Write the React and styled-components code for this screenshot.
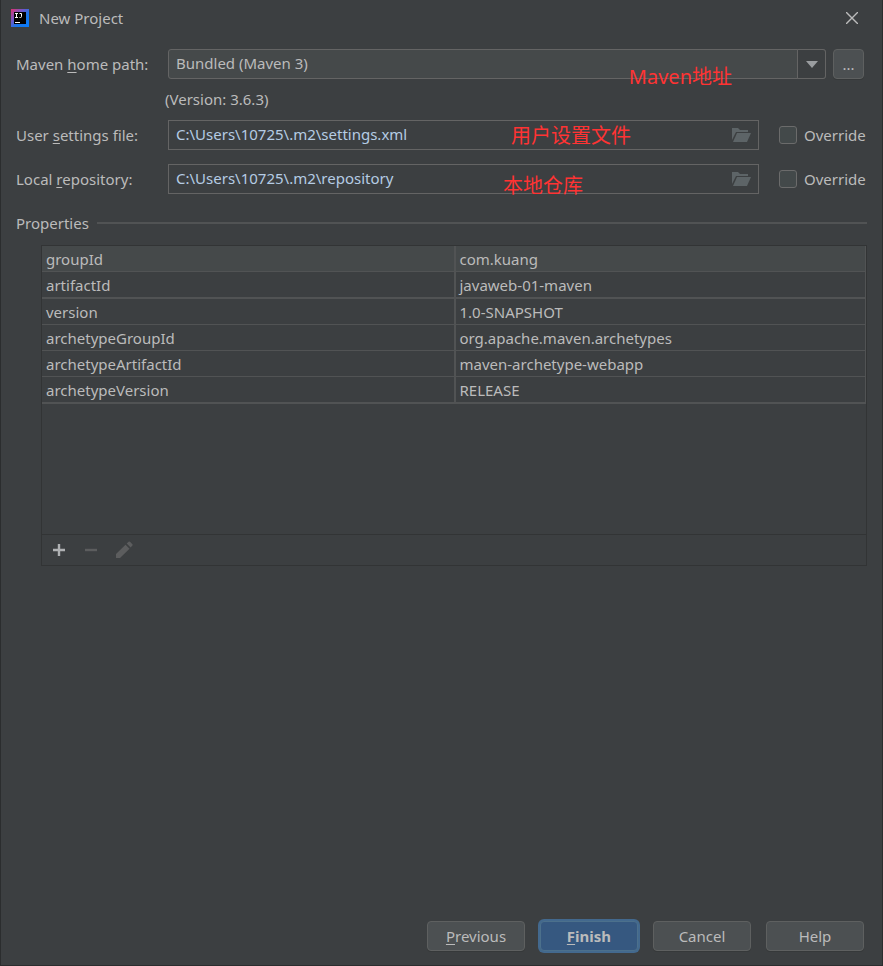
import { useState } from 'react';
import styled, { createGlobalStyle, css } from 'styled-components';

const colors = {
  panel: '#3c3f41',
  raised: '#45494a',
  button: '#4c5052',
  frame: '#2b2d2e',
  tableFrame: '#323435',
  line: '#515354',
  border: '#646464',
  text: '#bbbbbb',
  path: '#b5cce4',
  note: '#ff3333',
};

const GlobalStyle = createGlobalStyle`
  *, *::before, *::after {
    box-sizing: border-box;
  }

  body {
    margin: 0;
    background: ${colors.panel};
  }

  body, button, input, select {
    font-family: 'Noto Sans', 'Noto Sans CJK SC', sans-serif;
    font-size: 15px;
    line-height: 20px;
    color: ${colors.text};
  }
`;

const Dialog = styled.div`
  display: flex;
  flex-direction: column;
  min-height: 100vh;
  background: ${colors.panel};
  border: 1px solid ${colors.frame};
  border-top: 0;
`;

const TitleBar = styled.header`
  display: flex;
  align-items: center;
  gap: 10px;
  height: 36px;
  padding: 0 24px 0 10px;

  h1 {
    flex: 1;
    margin: 0;
    font-size: 15px;
    font-weight: 400;
  }
`;

const IconButton = styled.button`
  display: flex;
  flex: none;
  padding: 0;
  border: 0;
  background: none;

  svg {
    display: block;
  }
`;

const Form = styled.form`
  display: flex;
  flex-direction: column;
  padding: 13px 15px 0;
`;

const Row = styled.div`
  display: flex;
  align-items: center;
  margin-bottom: 14px;
`;

const Label = styled.label`
  flex: none;
  width: 152px;
`;

const Mnemonic = styled.span`
  text-decoration: underline;
  text-underline-offset: 2px;
`;

const Field = styled.div`
  position: relative;
  display: grid;
  flex: 1;
  min-width: 0;
  height: 30px;

  > * {
    grid-area: 1 / 1;
  }
`;

const Select = styled.select`
  appearance: none;
  width: 100%;
  padding: 0 36px 2px 7px;
  border: 1px solid ${colors.border};
  border-radius: 3px;
  background: ${colors.raised};
`;

const Arrow = styled.span`
  display: flex;
  align-items: center;
  justify-content: center;
  justify-self: end;
  width: 29px;
  border: 1px solid ${colors.border};
  border-radius: 0 3px 3px 0;
  background: ${colors.panel};
  pointer-events: none;
`;

const PathInput = styled.input`
  width: 100%;
  padding: 0 36px 2px 7px;
  border: 1px solid ${colors.border};
  background: ${colors.panel};
  color: ${colors.path};
`;

const BrowseButton = styled(IconButton)`
  align-self: center;
  justify-self: end;
  margin-right: 7px;
`;

const Note = styled.span`
  position: absolute;
  top: ${({ $top }) => $top}px;
  right: ${({ $right }) => $right}px;
  color: ${colors.note};
  font-size: 20px;
  line-height: 24px;
  pointer-events: none;
`;

const Version = styled.p`
  margin: -4px 0 11px 149px;
`;

const Override = styled.label`
  display: flex;
  flex: none;
  align-items: center;
  gap: 7px;
  width: 88px;
  margin-left: 20px;
`;

const Checkbox = styled.input`
  appearance: none;
  flex: none;
  width: 18px;
  height: 18px;
  margin: 0;
  border: 1px solid #6b6b6b;
  border-radius: 3px;
  background: #43494a;

  &:checked {
    background: #375a87;
  }
`;

const Button = styled.button`
  width: 98px;
  height: 30px;
  padding: 0;
  border: 1px solid #5e6060;
  border-radius: 4px;
  background: ${colors.button};
  box-shadow: 0 1px 0 #36393a;

  ${({ $primary }) =>
    $primary &&
    css`
      border-color: #4c708c;
      background: #365880;
      box-shadow: 0 0 0 2px #43698e;
      font-weight: 700;
    `}
`;

const MoreButton = styled(Button)`
  flex: none;
  width: 31px;
  margin: 0 3px 0 7px;
`;

const SectionTitle = styled.h2`
  display: flex;
  align-items: center;
  gap: 8px;
  margin: 5px 0 12px;
  font-size: 15px;
  font-weight: 400;

  &::after {
    content: '';
    flex: 1;
    height: 2px;
    background: ${colors.line};
  }
`;

const Properties = styled.div`
  display: flex;
  flex-direction: column;
  height: 321px;
  margin-left: 25px;
  border: 1px solid ${colors.tableFrame};
`;

const TableArea = styled.div`
  flex: 1;
`;

const Table = styled.table`
  width: 100%;
  table-layout: fixed;
  border-spacing: 0;
  border-right: 1px solid ${colors.line};

  td {
    height: 26px;
    padding: 1px 4px 0;
    border-bottom: 1px solid ${colors.line};
  }

  td + td {
    border-left: 2px solid ${colors.line};
  }

  tr:first-child {
    background: ${colors.raised};
  }

  tr:nth-child(2) td,
  tr:last-child td {
    height: 27px;
    border-bottom-width: 2px;
  }
`;

const Toolbar = styled.div`
  display: flex;
  align-items: center;
  gap: 14px;
  height: 31px;
  padding-left: 8px;
  border-top: 1px solid ${colors.tableFrame};
`;

const Footer = styled.footer`
  display: flex;
  justify-content: flex-end;
  gap: 15px;
  margin-top: auto;
  padding: 20px 18px 14px;
`;

const LogoIcon = () => (
  <svg width="18" height="18" viewBox="0 0 18 18" aria-hidden="true">
    <defs>
      <linearGradient id="logo" x1="0" y1="0" x2="1" y2="1">
        <stop offset="0" stopColor="#e0316f" />
        <stop offset="0.35" stopColor="#7256c8" />
        <stop offset="0.6" stopColor="#1a75e8" />
        <stop offset="1" stopColor="#087cfa" />
      </linearGradient>
    </defs>
    <rect width="18" height="18" fill="url(#logo)" />
    <rect x="3" y="3" width="12" height="12" fill="#000" />
    <path
      d="M4 4.5h3M5.5 4.5v4M4 8.5h3M8.5 4.5h2v3q0 1-1 1h-1M4 13.5h5"
      fill="none"
      stroke="#fff"
    />
  </svg>
);

const CloseIcon = () => (
  <svg width="12" height="12" viewBox="0 0 12 12" aria-hidden="true">
    <path d="M0 0l12 12M12 0L0 12" stroke="#bbb" strokeWidth="1.4" />
  </svg>
);

const FolderIcon = () => (
  <svg width="20" height="14" viewBox="0 0 20 14" aria-hidden="true">
    <path d="M0 0h6l2 2h8v2H4L0 12z" fill="#5d6467" />
    <path d="M5 5h14l-4 9H1z" fill="#5d6467" />
  </svg>
);

const PlusIcon = () => (
  <svg width="18" height="18" viewBox="0 0 18 18" aria-hidden="true">
    <path d="M9 3v12M3 9h12" stroke="#afb1b3" strokeWidth="2.4" />
  </svg>
);

const MinusIcon = () => (
  <svg width="18" height="18" viewBox="0 0 18 18" aria-hidden="true">
    <path d="M3 9h12" stroke="#5c5d5e" strokeWidth="2.4" />
  </svg>
);

const PencilIcon = () => (
  <svg width="20" height="18" viewBox="0 0 20 18" aria-hidden="true">
    <path d="M2 13L11.5 3.8l4 4L6 17H2zM12.7 2.6L14.6.8q.7-.6 1.4 0l2.4 2.4q.7.7 0 1.4l-1.8 1.9z" fill="#5c5d5e" />
  </svg>
);

const properties = [
  ['groupId', 'com.kuang'],
  ['artifactId', 'javaweb-01-maven'],
  ['version', '1.0-SNAPSHOT'],
  ['archetypeGroupId', 'org.apache.maven.archetypes'],
  ['archetypeArtifactId', 'maven-archetype-webapp'],
  ['archetypeVersion', 'RELEASE'],
];

const PathRow = ({ id, label, initialPath, note }) => {
  const [path, setPath] = useState(initialPath);

  return (
    <Row>
      <Label htmlFor={id}>{label}</Label>
      <Field>
        <PathInput id={id} value={path} onChange={(e) => setPath(e.target.value)} />
        <BrowseButton type="button" aria-label="Browse">
          <FolderIcon />
        </BrowseButton>
        {note}
      </Field>
      <Override>
        <Checkbox type="checkbox" />
        Override
      </Override>
    </Row>
  );
};

const App = () => (
  <>
    <GlobalStyle />
    <Dialog>
      <TitleBar>
        <LogoIcon />
        <h1>New Project</h1>
        <IconButton type="button" aria-label="Close">
          <CloseIcon />
        </IconButton>
      </TitleBar>

      <Form>
        <Row>
          <Label htmlFor="maven-home">
            Maven <Mnemonic>h</Mnemonic>ome path:
          </Label>
          <Field>
            <Select id="maven-home">
              <option>Bundled (Maven 3)</option>
            </Select>
            <Arrow>
              <svg width="12" height="7" viewBox="0 0 12 7" aria-hidden="true">
                <path d="M0 0h12L6 7z" fill="#9a9da0" />
              </svg>
            </Arrow>
            <Note $top={16} $right={94}>
              Maven地址
            </Note>
          </Field>
          <MoreButton type="button">...</MoreButton>
        </Row>
        <Version>(Version: 3.6.3)</Version>

        <PathRow
          id="settings-file"
          label={
            <>
              User <Mnemonic>s</Mnemonic>ettings file:
            </>
          }
          initialPath="C:\Users\10725\.m2\settings.xml"
          note={
            <Note $top={4} $right={128}>
              用户设置文件
            </Note>
          }
        />
        <PathRow
          id="local-repository"
          label={
            <>
              Local <Mnemonic>r</Mnemonic>epository:
            </>
          }
          initialPath="C:\Users\10725\.m2\repository"
          note={
            <Note $top={10} $right={176}>
              本地仓库
            </Note>
          }
        />

        <SectionTitle>Properties</SectionTitle>
        <Properties>
          <TableArea>
            <Table>
              <tbody>
                {properties.map(([name, value]) => (
                  <tr key={name}>
                    <td>{name}</td>
                    <td>{value}</td>
                  </tr>
                ))}
              </tbody>
            </Table>
          </TableArea>
          <Toolbar>
            <IconButton type="button" aria-label="Add">
              <PlusIcon />
            </IconButton>
            <IconButton type="button" aria-label="Remove" disabled>
              <MinusIcon />
            </IconButton>
            <IconButton type="button" aria-label="Edit" disabled>
              <PencilIcon />
            </IconButton>
          </Toolbar>
        </Properties>
      </Form>

      <Footer>
        <Button type="button">
          <Mnemonic>P</Mnemonic>revious
        </Button>
        <Button type="button" $primary>
          <Mnemonic>F</Mnemonic>inish
        </Button>
        <Button type="button">Cancel</Button>
        <Button type="button">Help</Button>
      </Footer>
    </Dialog>
  </>
);

export default App;
